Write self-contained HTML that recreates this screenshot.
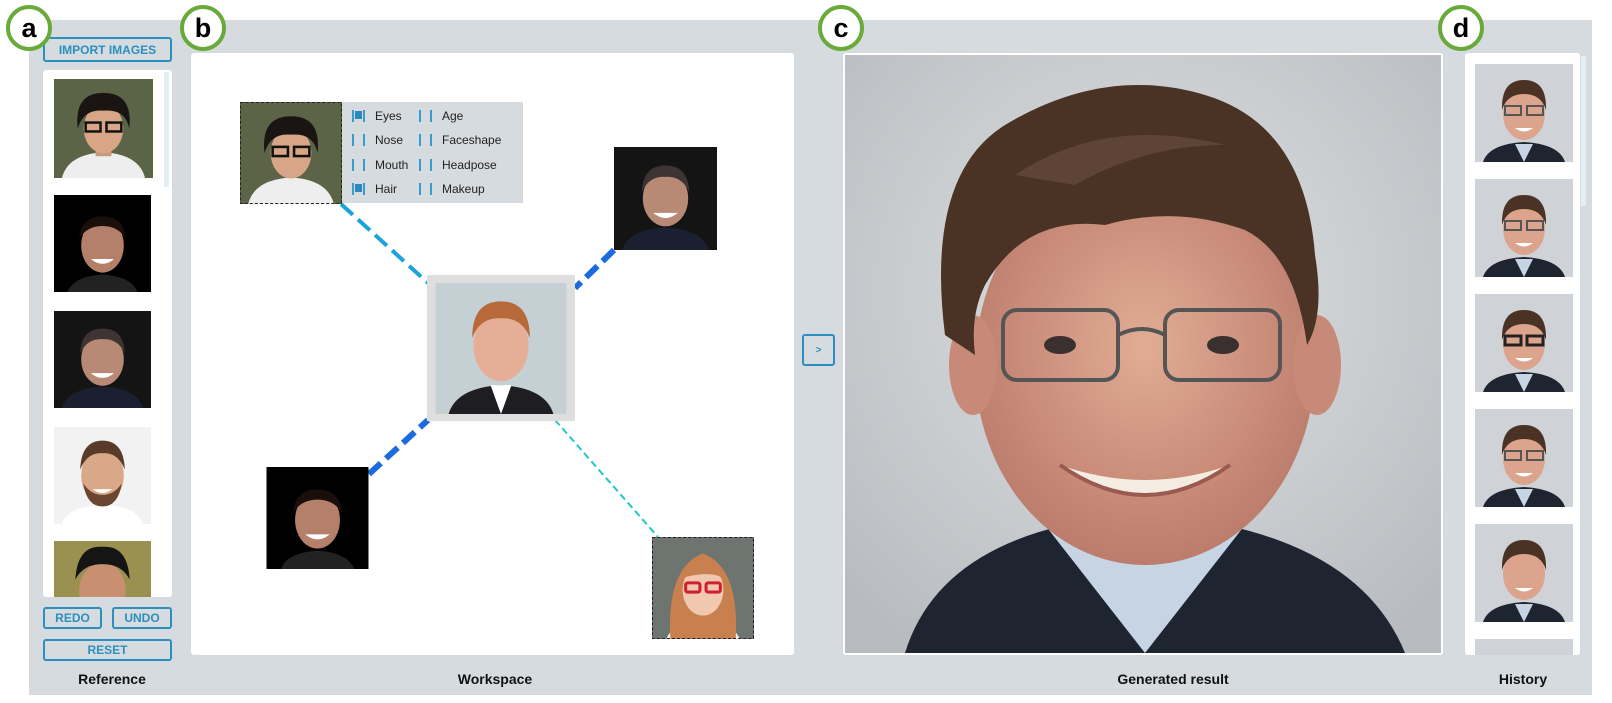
<!DOCTYPE html>
<html><head><meta charset="utf-8"><style>
*{margin:0;padding:0;box-sizing:border-box}
body{width:1612px;height:703px;background:#fff;position:relative;overflow:hidden;font-family:"Liberation Sans",Arial,sans-serif}
.abs{position:absolute}
.btn{position:absolute;border:2px solid #2b8fc0;border-radius:3px;color:#2b8fc0;font-weight:bold;font-size:12px;display:flex;align-items:center;justify-content:center;background:#d5dbde}
.lbl{position:absolute;top:671px;font-weight:bold;font-size:14px;color:#111;transform:translateX(-50%);white-space:nowrap}
.badge{position:absolute;width:46px;height:46px;border:4px solid #6aaa3a;border-radius:50%;background:#fff;font-weight:bold;font-size:27px;display:flex;align-items:center;justify-content:center;color:#000;line-height:1}
svg.f{position:absolute;display:block}
.row{position:absolute;font-size:12px;color:#222;display:flex;align-items:center}
.cb{display:inline-block;width:13px;height:12px;border-left:2px solid #3a9ccc;border-right:2px solid #3a9ccc;margin-right:10px;position:relative}
.cb.on::after{content:"";position:absolute;left:1px;top:1px;width:7px;height:8px;background:#2b88c0}
</style></head><body>
<div class="abs" style="left:29px;top:20px;width:1563px;height:675px;background:#d5dbde"></div>

<div class="btn" style="left:43px;top:37px;width:129px;height:25px;font-size:12px">IMPORT IMAGES</div>
<div class="abs" style="left:43px;top:70px;width:129px;height:527px;background:#fff;border-radius:3px"></div>
<div class="abs" style="left:164px;top:72px;width:5px;height:115px;background:#e4eef5"></div>

<svg class="f" style="left:54px;top:79px" width="99" height="99" viewBox="0 0 100 100"><rect width="100" height="100" fill="#5c6448"/><path d="M8 100 Q14 76 50 74 Q86 76 92 100Z" fill="#eee"/><rect x="42" y="62" width="16" height="16" fill="#c99878"/><ellipse cx="50" cy="50" rx="20" ry="25" fill="#d8a686"/><path d="M24 50 Q20 14 50 14 Q80 14 76 50 Q72 30 50 32 Q30 30 24 50Z" fill="#1a1512"/><rect x="32" y="44" width="15" height="9" fill="none" stroke="#111" stroke-width="2.5"/><rect x="53" y="44" width="15" height="9" fill="none" stroke="#111" stroke-width="2.5"/></svg>
<svg class="f" style="left:54px;top:195px" width="97" height="97" viewBox="0 0 100 100"><rect width="100" height="100" fill="#000"/><path d="M14 100 Q20 84 50 82 Q80 84 86 100Z" fill="#222"/><ellipse cx="50" cy="52" rx="22" ry="28" fill="#b5806a"/><path d="M26 45 Q28 22 50 22 Q72 22 74 45 Q66 32 50 32 Q34 32 26 45Z" fill="#1a0f0a"/><path d="M38 66 Q50 76 62 66Z" fill="#fff"/></svg>
<svg class="f" style="left:54px;top:310px" width="97" height="99" viewBox="0 0 100 100"><rect width="100" height="100" fill="#141414"/><path d="M8 100 Q14 80 50 78 Q86 80 92 100Z" fill="#1a2030"/><ellipse cx="50" cy="50" rx="22" ry="27" fill="#b88a76"/><path d="M27 44 Q28 18 50 18 Q72 18 73 44 Q66 28 50 29 Q34 28 27 44Z" fill="#3e3434"/><path d="M38 64 Q50 74 62 64Z" fill="#fff"/></svg>
<svg class="f" style="left:54px;top:426px" width="97" height="99" viewBox="0 0 100 100"><rect width="100" height="100" fill="#f2f2f2"/><path d="M8 100 Q14 82 50 80 Q86 82 92 100Z" fill="#fff"/><ellipse cx="50" cy="50" rx="22" ry="28" fill="#d8a888"/><path d="M30 58 Q34 82 50 82 Q66 82 70 58 Q62 70 50 70 Q38 70 30 58Z" fill="#6a4630"/><path d="M27 44 Q28 14 50 14 Q72 14 73 44 Q66 26 50 27 Q34 26 27 44Z" fill="#5a3a28"/><path d="M40 64 Q50 72 60 64Z" fill="#fff"/></svg>
<svg class="f" style="left:54px;top:541px" width="97" height="56" viewBox="0 0 100 58" preserveAspectRatio="none"><rect width="100" height="58" fill="#9a9050"/><ellipse cx="50" cy="52" rx="24" ry="30" fill="#c89070"/><path d="M22 40 Q24 4 50 6 Q76 4 78 40 Q70 24 50 24 Q30 24 22 40Z" fill="#151515"/></svg>

<div class="btn" style="left:43px;top:607px;width:59px;height:22px">REDO</div>
<div class="btn" style="left:112px;top:607px;width:60px;height:22px">UNDO</div>
<div class="btn" style="left:43px;top:639px;width:129px;height:22px">RESET</div>

<div class="abs" style="left:191px;top:53px;width:603px;height:602px;background:#fff;border-radius:3px"></div>
<svg class="abs" style="left:0;top:0" width="1612" height="703">
<line x1="341" y1="204" x2="428" y2="283" stroke="#1aa3dc" stroke-width="4" stroke-dasharray="16,7"/>
<line x1="614" y1="250" x2="575" y2="288" stroke="#1a6ae0" stroke-width="6" stroke-dasharray="16,7"/>
<line x1="369" y1="474" x2="428" y2="420" stroke="#1a6ae0" stroke-width="6" stroke-dasharray="16,7"/>
<line x1="555" y1="420" x2="658" y2="537" stroke="#20c8c8" stroke-width="2" stroke-dasharray="7,4"/>
</svg>
<div class="abs" style="left:341px;top:102px;width:182px;height:101px;background:#d5dbde"></div>
<div class="row" style="left:352px;top:109px"><span class="cb on"></span>Eyes</div>
<div class="row" style="left:352px;top:133px"><span class="cb"></span>Nose</div>
<div class="row" style="left:352px;top:158px"><span class="cb"></span>Mouth</div>
<div class="row" style="left:352px;top:182px"><span class="cb on"></span>Hair</div>
<div class="row" style="left:419px;top:109px"><span class="cb"></span>Age</div>
<div class="row" style="left:419px;top:133px"><span class="cb"></span>Faceshape</div>
<div class="row" style="left:419px;top:158px"><span class="cb"></span>Headpose</div>
<div class="row" style="left:419px;top:182px"><span class="cb"></span>Makeup</div>

<svg class="f" style="left:240px;top:102px" width="102" height="102" viewBox="0 0 100 100"><rect width="100" height="100" fill="#5c6448"/><path d="M8 100 Q14 76 50 74 Q86 76 92 100Z" fill="#eee"/><ellipse cx="50" cy="50" rx="20" ry="25" fill="#d8a686"/><path d="M24 50 Q20 14 50 14 Q80 14 76 50 Q72 30 50 32 Q30 30 24 50Z" fill="#1a1512"/><rect x="32" y="44" width="15" height="9" fill="none" stroke="#111" stroke-width="2.5"/><rect x="53" y="44" width="15" height="9" fill="none" stroke="#111" stroke-width="2.5"/><rect x="0.5" y="0.5" width="99" height="99" fill="none" stroke="#222" stroke-dasharray="3,2"/></svg>
<svg class="f" style="left:614px;top:147px" width="103" height="103" viewBox="0 0 100 100"><rect width="100" height="100" fill="#141414"/><path d="M8 100 Q14 80 50 78 Q86 80 92 100Z" fill="#1a2030"/><ellipse cx="50" cy="50" rx="22" ry="27" fill="#b88a76"/><path d="M27 44 Q28 18 50 18 Q72 18 73 44 Q66 28 50 29 Q34 28 27 44Z" fill="#3e3434"/><path d="M38 64 Q50 74 62 64Z" fill="#fff"/></svg>
<div class="abs" style="left:427px;top:275px;width:148px;height:146px;background:#dedede"></div>
<svg class="f" style="left:435px;top:283px" width="132" height="131" viewBox="0 0 100 100"><rect width="100" height="100" fill="#c5d0d5"/><path d="M10 100 Q16 80 50 78 Q84 80 90 100Z" fill="#1e1e22"/><path d="M42 78 L50 100 L58 78Z" fill="#fff"/><ellipse cx="50" cy="48" rx="21" ry="27" fill="#e6ae96"/><path d="M28 42 Q28 14 50 14 Q72 14 72 42 Q66 26 50 27 Q34 26 28 42Z" fill="#b8693a"/></svg>
<svg class="f" style="left:266px;top:467px" width="103" height="102" viewBox="0 0 100 100"><rect width="100" height="100" fill="#000"/><path d="M14 100 Q20 84 50 82 Q80 84 86 100Z" fill="#222"/><ellipse cx="50" cy="52" rx="22" ry="28" fill="#b5806a"/><path d="M26 45 Q28 22 50 22 Q72 22 74 45 Q66 32 50 32 Q34 32 26 45Z" fill="#1a0f0a"/><path d="M38 66 Q50 76 62 66Z" fill="#fff"/></svg>
<svg class="f" style="left:651px;top:537px" width="104" height="102" viewBox="0 0 100 100"><rect width="100" height="100" fill="#6e7470"/><path d="M14 100 Q20 84 50 82 Q80 84 86 100Z" fill="#eee"/><path d="M18 100 Q14 30 50 16 Q86 30 82 100 Z" fill="#c8804e"/><ellipse cx="50" cy="52" rx="20" ry="25" fill="#f0c8b0"/><path d="M30 40 Q40 24 50 26 Q62 24 72 42 Q60 32 30 40Z" fill="#c8804e"/><rect x="33" y="45" width="14" height="9" rx="2" fill="none" stroke="#d02030" stroke-width="3"/><rect x="53" y="45" width="14" height="9" rx="2" fill="none" stroke="#d02030" stroke-width="3"/><rect x="0.5" y="0.5" width="99" height="99" fill="none" stroke="#222" stroke-dasharray="3,2"/></svg>

<div class="btn" style="left:802px;top:334px;width:33px;height:32px;font-size:10px">&gt;</div>

<div class="abs" style="left:843px;top:53px;width:600px;height:602px;background:#fff;border-radius:3px"></div>
<svg class="f" style="left:845px;top:55px" width="596" height="598" viewBox="0 0 596 598">
<defs><radialGradient id="bg" cx="50%" cy="40%" r="70%"><stop offset="0" stop-color="#e0e2e4"/><stop offset="1" stop-color="#b8bcc0"/></radialGradient><radialGradient id="sk" cx="50%" cy="45%" r="60%"><stop offset="0" stop-color="#e2ac94"/><stop offset="1" stop-color="#b87868"/></radialGradient></defs>
<rect width="596" height="598" fill="url(#bg)"/>
<path d="M60 598 Q90 500 220 470 L380 470 Q520 500 560 598Z" fill="#1e2430"/>
<path d="M200 470 L300 598 L400 470 L380 440 L220 440Z" fill="#c6d4e4"/>
<rect x="230" y="400" width="140" height="90" fill="#c08870"/>
<ellipse cx="300" cy="310" rx="170" ry="200" fill="url(#sk)"/>
<ellipse cx="128" cy="310" rx="24" ry="50" fill="#c88a78"/><ellipse cx="472" cy="310" rx="24" ry="50" fill="#c88a78"/>
<path d="M100 280 Q80 120 160 70 Q260 10 360 40 Q460 70 470 200 Q480 260 462 290 Q450 200 400 175 Q330 150 260 170 Q180 160 140 230 Q125 260 130 300 Z" fill="#4a3324"/>
<path d="M170 120 Q260 60 380 90 Q300 90 230 130Z" fill="#6a5040" opacity=".6"/>
<rect x="158" y="255" width="115" height="70" rx="14" fill="none" stroke="#555" stroke-width="4"/>
<rect x="320" y="255" width="115" height="70" rx="14" fill="none" stroke="#555" stroke-width="4"/>
<path d="M273 280 Q297 268 320 280" fill="none" stroke="#555" stroke-width="4"/>
<ellipse cx="215" cy="290" rx="16" ry="9" fill="#3a3030"/><ellipse cx="378" cy="290" rx="16" ry="9" fill="#3a3030"/>
<path d="M215 410 Q300 470 385 410 Q300 440 215 410Z" fill="#f4ece0"/>
<path d="M215 410 Q300 470 385 410" fill="none" stroke="#9a5a50" stroke-width="4"/>
</svg>

<div class="abs" style="left:1465px;top:53px;width:115px;height:602px;background:#fff;border-radius:3px"></div>
<div class="abs" style="left:1581px;top:56px;width:5px;height:150px;background:#e4eef5"></div>
<div class="abs" style="left:1475px;top:64px;width:98px;height:591px;overflow:hidden">
<svg width="98" height="591" viewBox="0 0 98 591" style="display:block">
<defs><g id="h"><rect width="98" height="98" fill="#cfd3d7"/><path d="M8 98 Q14 80 49 78 Q84 80 90 98Z" fill="#1e2430"/><path d="M40 80 L49 98 L58 80Z" fill="#c6d4e4"/><ellipse cx="49" cy="50" rx="21" ry="26" fill="#dca48c"/><path d="M27 46 Q26 16 49 16 Q72 16 71 46 Q66 30 49 30 Q32 30 27 46Z" fill="#4a3324"/><path d="M40 64 Q49 71 58 64Z" fill="#fff"/></g></defs>
<use href="#h" y="0"/><use href="#h" y="115"/><use href="#h" y="230"/><use href="#h" y="345"/><use href="#h" y="460"/><use href="#h" y="575"/>
<g fill="none" stroke="#555" stroke-width="2"><rect x="30" y="42" width="16" height="9"/><rect x="52" y="42" width="16" height="9"/><rect x="30" y="157" width="16" height="9"/><rect x="52" y="157" width="16" height="9"/><rect x="30" y="272" width="16" height="9" stroke="#222" stroke-width="3"/><rect x="52" y="272" width="16" height="9" stroke="#222" stroke-width="3"/><rect x="30" y="387" width="16" height="9"/><rect x="52" y="387" width="16" height="9"/></g>
</svg></div>

<div class="lbl" style="left:112px">Reference</div>
<div class="lbl" style="left:495px">Workspace</div>
<div class="lbl" style="left:1173px">Generated result</div>
<div class="lbl" style="left:1523px">History</div>

<div class="badge" style="left:6px;top:5px">a</div>
<div class="badge" style="left:180px;top:5px">b</div>
<div class="badge" style="left:818px;top:5px">c</div>
<div class="badge" style="left:1438px;top:5px">d</div>
</body></html>
